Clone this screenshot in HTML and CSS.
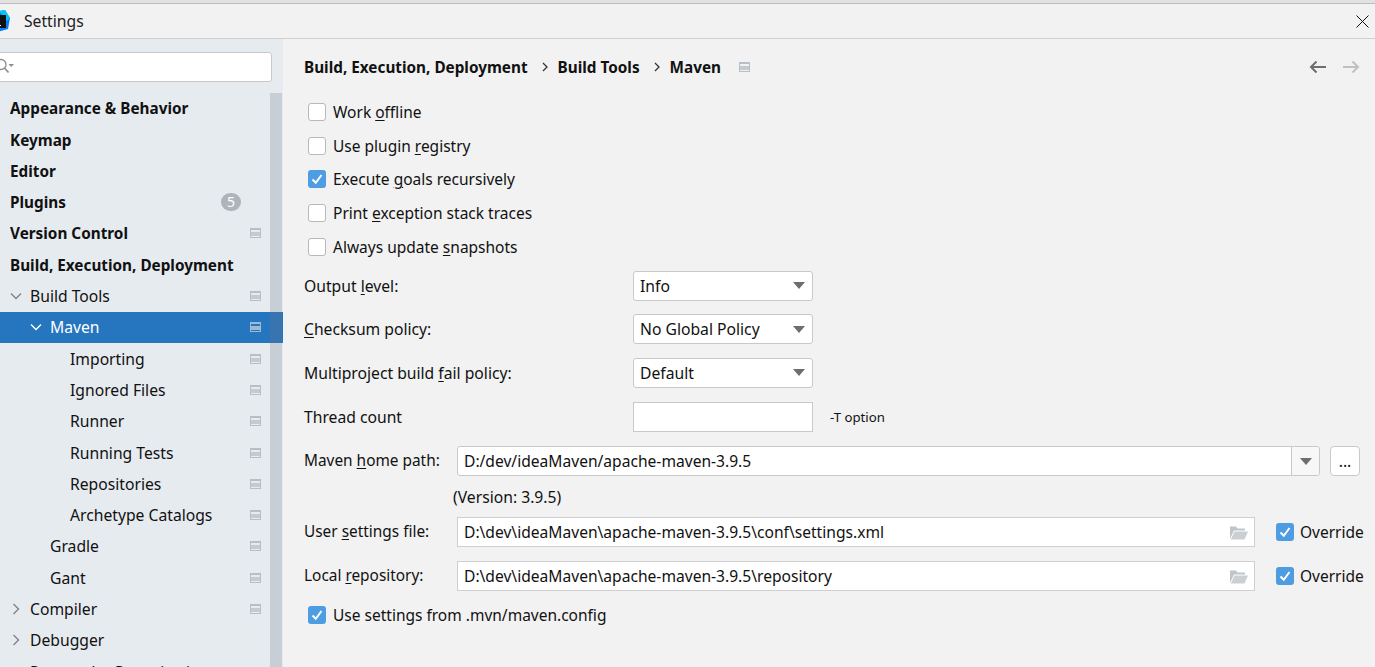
FILE: index.html
```html
<!DOCTYPE html>
<html lang="en">
<head>
  <meta charset="UTF-8">
  <title>Settings</title>
  <link rel="stylesheet" href="styles.css">
</head>
<body>
  <div class="titlebar">
    <svg class="logo" width="22" height="22" viewBox="0 0 22 22">
      <polygon points="2,3 16,0 21,8 19,19 8,22 1,17" fill="#087cfa"/>
      <polygon points="10,1 16,0 21,8 18,11" fill="#07c3f2"/>
      <polygon points="1,6 8,2 10,10 3,14" fill="#fc801d"/>
      <rect x="4" y="5" width="13" height="13" fill="#111"/>
      <rect x="6" y="15" width="6" height="1" fill="#fff"/>
    </svg>
    <span class="title-text">Settings</span>
    <svg class="close" width="13" height="13" viewBox="0 0 13 13">
      <path d="M0.5 0.5L12.5 12.5M12.5 0.5L0.5 12.5" stroke="#111" fill="none"/>
    </svg>
  </div>

  <div class="content">
    <aside class="sidebar">
      <div class="search">
        <svg width="24" height="18" viewBox="0 0 24 18">
          <circle cx="5" cy="6.5" r="5" stroke="#8a8f94" stroke-width="1.3" fill="none"/>
          <path d="M8.5 10L12.5 14.5" stroke="#8a8f94" stroke-width="1.7"/>
          <polygon points="12.5,6 18,6 15.2,9" fill="#8a8f94"/>
        </svg>
      </div>
      <div class="scrollbar"></div>
      <ul class="tree">
        <li class="row bold"><span class="name">Appearance &amp; Behavior</span></li>
        <li class="row bold"><span class="name">Keymap</span></li>
        <li class="row bold"><span class="name">Editor</span></li>
        <li class="row bold"><span class="name">Plugins</span><span class="badge">5</span></li>
        <li class="row bold"><span class="name">Version Control</span><span class="proj"></span></li>
        <li class="row bold"><span class="name">Build, Execution, Deployment</span></li>
        <li class="row lv1">
          <svg class="arrow" width="12" height="12" viewBox="0 0 12 12"><path d="M1 3.5L6 8.5L11 3.5" stroke="#7f8488" stroke-width="1.4" fill="none"/></svg>
          <span class="name">Build Tools</span><span class="proj"></span>
        </li>
        <li class="row lv2 selected">
          <svg class="arrow" width="12" height="12" viewBox="0 0 12 12"><path d="M1 3.5L6 8.5L11 3.5" stroke="#fff" stroke-width="1.4" fill="none"/></svg>
          <span class="name">Maven</span><span class="proj"></span>
        </li>
        <li class="row lv3"><span class="name">Importing</span><span class="proj"></span></li>
        <li class="row lv3"><span class="name">Ignored Files</span><span class="proj"></span></li>
        <li class="row lv3"><span class="name">Runner</span><span class="proj"></span></li>
        <li class="row lv3"><span class="name">Running Tests</span><span class="proj"></span></li>
        <li class="row lv3"><span class="name">Repositories</span><span class="proj"></span></li>
        <li class="row lv3"><span class="name">Archetype Catalogs</span><span class="proj"></span></li>
        <li class="row lv2 noarrow"><span class="name">Gradle</span><span class="proj"></span></li>
        <li class="row lv2 noarrow"><span class="name">Gant</span><span class="proj"></span></li>
        <li class="row lv1">
          <svg class="arrow" width="12" height="12" viewBox="0 0 12 12"><path d="M3.5 1L8.5 6L3.5 11" stroke="#7f8488" stroke-width="1.4" fill="none"/></svg>
          <span class="name">Compiler</span><span class="proj"></span>
        </li>
        <li class="row lv1">
          <svg class="arrow" width="12" height="12" viewBox="0 0 12 12"><path d="M3.5 1L8.5 6L3.5 11" stroke="#7f8488" stroke-width="1.4" fill="none"/></svg>
          <span class="name">Debugger</span>
        </li>
        <li class="row lv1 noarrow"><span class="name">Remote Jar Repositories</span><span class="proj"></span></li>
      </ul>
    </aside>

    <main class="panel">
      <div class="crumbs">
        <span>Build, Execution, Deployment</span>
        <svg class="sep" width="6" height="10" viewBox="0 0 6 10"><path d="M1 1L5 5L1 9" stroke="#333" stroke-width="1.3" fill="none"/></svg>
        <span>Build Tools</span>
        <svg class="sep" width="6" height="10" viewBox="0 0 6 10"><path d="M1 1L5 5L1 9" stroke="#333" stroke-width="1.3" fill="none"/></svg>
        <span>Maven</span>
        <span class="proj crumb-proj"></span>
        <div class="nav">
          <svg width="18" height="14" viewBox="0 0 18 14"><path d="M17 7H2M7.5 1.5L2 7L7.5 12.5" stroke="#6e6e6e" stroke-width="2" fill="none"/></svg>
          <svg width="18" height="14" viewBox="0 0 18 14"><path d="M1 7H16M10.5 1.5L16 7L10.5 12.5" stroke="#c0c0c0" stroke-width="2" fill="none"/></svg>
        </div>
      </div>

      <div class="checks">
        <div class="check-row"><span class="box"></span><span>Work <u>o</u>ffline</span></div>
        <div class="check-row"><span class="box"></span><span>Use plugin <u>r</u>egistry</span></div>
        <div class="check-row"><span class="box on"><svg width="18" height="18" viewBox="0 0 18 18"><path d="M4.5 9.5L7.8 12.8L13.5 5" stroke="#fff" stroke-width="2" fill="none"/></svg></span><span>Execute <u>g</u>oals recursively</span></div>
        <div class="check-row"><span class="box"></span><span>Print <u>e</u>xception stack traces</span></div>
        <div class="check-row"><span class="box"></span><span>Always update <u>s</u>napshots</span></div>
      </div>

      <div class="options">
        <label>Output <u>l</u>evel:</label>
        <div class="select">Info<span class="caret"></span></div>
        <label><u>C</u>hecksum policy:</label>
        <div class="select">No Global Policy<span class="caret"></span></div>
        <label>Multiproject build <u>f</u>ail policy:</label>
        <div class="select">Default<span class="caret"></span></div>
        <label>Thread count</label>
        <div class="thread-line"><div class="select plain"></div><span class="hint">-T option</span></div>
      </div>

      <div class="paths">
        <label>Maven <u>h</u>ome path:</label>
        <div class="path-line">
          <div class="combo"><span class="value">D:/dev/ideaMaven/apache-maven-3.9.5</span><span class="combo-btn"><span class="caret"></span></span></div>
          <div class="dots">...</div>
        </div>
        <div></div>
        <div class="version">(Version: 3.9.5)</div>
        <label>User <u>s</u>ettings file:</label>
        <div class="path-line">
          <div class="field">
            <span class="value">D:\dev\ideaMaven\apache-maven-3.9.5\conf\settings.xml</span>
            <svg class="folder" width="19" height="15" viewBox="0 0 19 15"><path d="M1 14V1.5H7L8.5 3.5H16V5.5H5L1 14Z" fill="#bfc6cb"/><path d="M5.5 6.5H19L15.5 14.5H1.8Z" fill="#c9cfd3"/></svg>
          </div>
          <div class="check-row override"><span class="box on"><svg width="18" height="18" viewBox="0 0 18 18"><path d="M4.5 9.5L7.8 12.8L13.5 5" stroke="#fff" stroke-width="2" fill="none"/></svg></span><span>Override</span></div>
        </div>
        <label>Local <u>r</u>epository:</label>
        <div class="path-line">
          <div class="field">
            <span class="value">D:\dev\ideaMaven\apache-maven-3.9.5\repository</span>
            <svg class="folder" width="19" height="15" viewBox="0 0 19 15"><path d="M1 14V1.5H7L8.5 3.5H16V5.5H5L1 14Z" fill="#bfc6cb"/><path d="M5.5 6.5H19L15.5 14.5H1.8Z" fill="#c9cfd3"/></svg>
          </div>
          <div class="check-row override"><span class="box on"><svg width="18" height="18" viewBox="0 0 18 18"><path d="M4.5 9.5L7.8 12.8L13.5 5" stroke="#fff" stroke-width="2" fill="none"/></svg></span><span>Override</span></div>
        </div>
      </div>

      <div class="check-row"><span class="box on"><svg width="18" height="18" viewBox="0 0 18 18"><path d="M4.5 9.5L7.8 12.8L13.5 5" stroke="#fff" stroke-width="2" fill="none"/></svg></span><span>Use settings from .mvn/maven.config</span></div>
    </main>
  </div>
</body>
</html>
```

FILE: styles.css
```css
* {
  box-sizing: border-box;
}
html, body {
  margin: 0;
  height: 667px;
  overflow: hidden;
}
body {
  display: flex;
  flex-direction: column;
  font-family: "Noto Sans", sans-serif;
  font-size: 15.7px;
  line-height: 20px;
  color: #111;
  background: #f2f2f2;
}
u {
  text-underline-offset: 2px;
}

/* title bar */
.titlebar {
  height: 39px;
  flex: none;
  display: flex;
  align-items: center;
  padding-top: 4px;
  border-bottom: 1px solid #d0d0d0;
  background: linear-gradient(#e2e2e2 3px, #bdbdbd 3px, #bdbdbd 4px, #f2f2f2 4px);
}
.logo {
  margin-left: -11px;
  flex: none;
}
.title-text {
  margin-left: 13px;
  color: #222;
}
.close {
  margin-left: auto;
  margin-right: 6px;
}

.content {
  flex: 1;
  display: flex;
  min-height: 0;
}

/* left tree */
.sidebar {
  width: 283px;
  flex: none;
  background: #e6ebf0;
  position: relative;
  overflow: hidden;
  padding-top: 13px;
}
.search {
  height: 30px;
  width: 285px;
  margin-left: -13px;
  background: #fff;
  border: 1px solid #c9c9c9;
  border-radius: 3px;
  display: flex;
  align-items: center;
  padding-left: 8px;
}
.scrollbar {
  position: absolute;
  left: 270px;
  top: 54px;
  bottom: 0;
  width: 12px;
  background: rgba(110, 120, 130, 0.25);
}
.tree {
  list-style: none;
  margin: 10.6px 0 0;
  padding: 0;
}
.row {
  height: 31.3px;
  display: flex;
  align-items: center;
  padding-left: 10px;
  padding-right: 22px;
}
.bold {
  font-weight: 700;
  font-size: 15.3px;
}
.lv1 {
  padding-left: 10px;
}
.lv2 {
  padding-left: 30px;
}
.lv1.noarrow {
  padding-left: 30px;
}
.lv2.noarrow {
  padding-left: 50px;
}
.lv3 {
  padding-left: 70px;
}
.arrow {
  margin-right: 8px;
  flex: none;
}
.selected {
  background: #2675bf;
  color: #fff;
}
.name {
  white-space: nowrap;
}
.proj {
  display: block;
  width: 11px;
  height: 10px;
  flex: none;
  border: 1px solid #b7bfc6;
  border-top-width: 2px;
  background: linear-gradient(#e6ebf0 2px, #c3cad0 2px, #c3cad0 6px, #e6ebf0 6px);
}
.row .proj {
  margin-left: auto;
}
.selected .proj {
  border-color: #9db9d4;
  background: linear-gradient(#2675bf 2px, #9db9d4 2px, #9db9d4 6px, #2675bf 6px);
}
.crumbs .proj {
  background: linear-gradient(#f2f2f2 2px, #c3cad0 2px, #c3cad0 6px, #f2f2f2 6px);
}
.badge {
  margin-left: auto;
  margin-right: 20px;
  width: 20px;
  height: 18px;
  border-radius: 9px;
  background: #adb5bb;
  color: #fff;
  font-weight: 400;
  font-size: 14px;
  line-height: 18px;
  text-align: center;
}

/* right panel */
.panel {
  flex: 1;
  min-width: 0;
  padding-left: 21px;
  padding-right: 15px;
}
.crumbs {
  height: 56px;
  display: flex;
  align-items: center;
  font-weight: 700;
  font-size: 15.3px;
}
.crumbs .sep {
  margin: 0 10px 0 14px;
}
.crumb-proj {
  margin-left: 18px;
}
.nav {
  margin-left: auto;
  display: flex;
  gap: 15px;
}
.check-row {
  height: 33.8px;
  display: flex;
  align-items: center;
  gap: 7px;
  padding-left: 4px;
  font-size: 15.5px;
}
.box {
  width: 18px;
  height: 18px;
  flex: none;
  background: #fff;
  border: 1px solid #b8b8b8;
  border-radius: 3px;
}
.box.on {
  background: #4e9de3;
  border: 0;
}
.box svg {
  display: block;
}
.options {
  display: grid;
  grid-template-columns: 329px 1fr;
  grid-auto-rows: 43.6px;
  align-items: center;
}
.select {
  width: 180px;
  height: 30px;
  background: #fff;
  border: 1px solid #c9c9c9;
  border-radius: 3px;
  padding-left: 6px;
  display: flex;
  align-items: center;
  justify-content: space-between;
  padding-right: 7px;
}
.select.plain {
  border-radius: 0;
}
.caret {
  width: 0;
  height: 0;
  border-left: 6px solid transparent;
  border-right: 6px solid transparent;
  border-top: 7px solid #6e6e6e;
}
.thread-line {
  display: flex;
  align-items: center;
  gap: 17px;
}
.hint {
  font-size: 13.2px;
}
.paths {
  margin-top: 1px;
  display: grid;
  grid-template-columns: 153px minmax(0, 1fr);
  align-items: center;
  grid-template-rows: 44px 27px 44px 44px;
}
.paths label {
  font-size: 15.4px;
}
.path-line {
  display: flex;
  align-items: center;
}
.combo {
  flex: 1;
  height: 30px;
  display: flex;
  align-items: center;
  background: #fff;
  border: 1px solid #c9c9c9;
  border-radius: 3px;
}
.value {
  padding-left: 6px;
  flex: 1;
  font-size: 15.6px;
}
.combo-btn {
  width: 28px;
  height: 28px;
  background: #f7f7f7;
  border-left: 1px solid #c9c9c9;
  display: flex;
  align-items: center;
  justify-content: center;
  border-radius: 0 3px 3px 0;
}
.dots {
  width: 30px;
  height: 30px;
  margin-left: 10px;
  background: #fff;
  border: 1px solid #c9c9c9;
  border-radius: 4px;
  text-align: center;
  line-height: 28px;
}
.version {
  margin-left: -4px;
}
.field {
  width: 798px;
  height: 30px;
  flex: none;
  display: flex;
  align-items: center;
  background: #fff;
  border: 1px solid #cfcfcf;
  padding-right: 6px;
}
.folder {
  flex: none;
}
.override {
  padding-left: 21px;
  gap: 6px;
}
```
